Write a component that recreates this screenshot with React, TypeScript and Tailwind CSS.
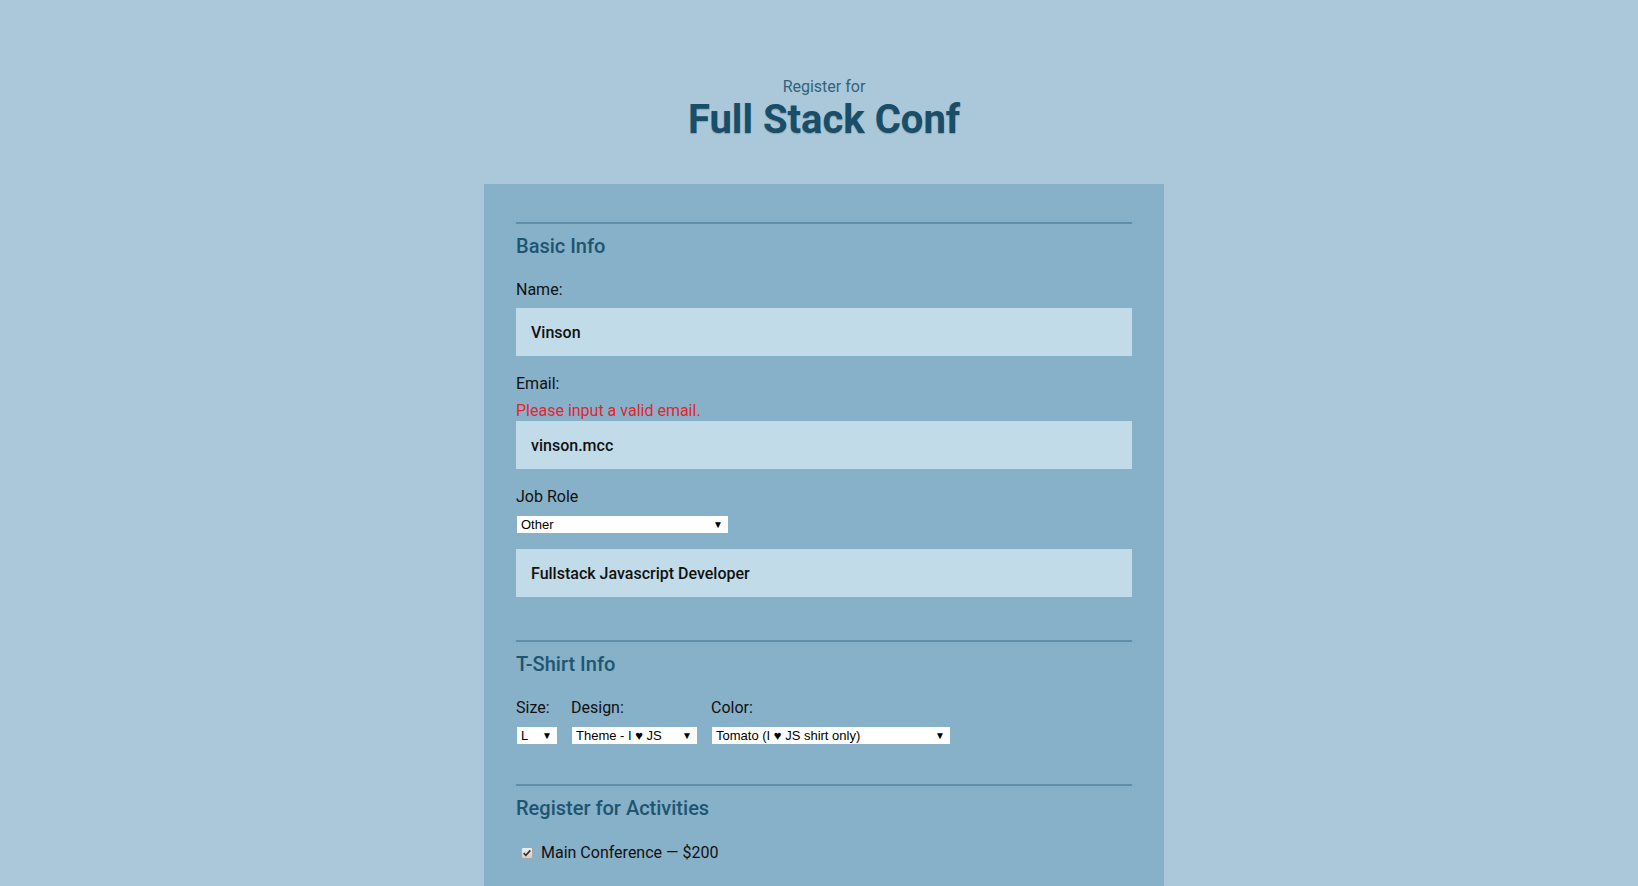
import React from 'react';

const FakeSelect: React.FC<{ value: string; className: string }> = ({ value, className }) => (
    <div
        className={`ml-[1px] flex h-[17px] items-center justify-between bg-white pl-[4px] pr-[5px] font-['Liberation_Sans',Arial,sans-serif] text-[13px] leading-[17px] text-black ${className}`}
    >
        <span className="whitespace-nowrap">{value}</span>
        <span className="text-[10px] leading-none">▼</span>
    </div>
);

const TextField: React.FC<{ value: string; className?: string }> = ({ value, className = '' }) => (
    <div className={`flex h-[48px] items-center bg-[#c1dbe8] px-[15px] pt-[1px] text-[16px] font-medium text-[#111] ${className}`}>
        {value}
    </div>
);

const Legend: React.FC<{ children: React.ReactNode }> = ({ children }) => (
    <h2 className="mt-[9px] pt-[1px] text-[20px] leading-[24px] font-medium text-[#1e5571]">{children}</h2>
);

export default function App() {
    return (
        <div className="min-h-screen bg-[#abc8da] pl-[10px] font-['Roboto','Noto_Sans',sans-serif]">
            <header className="pt-[78px] text-center">
                <p className="text-[16px] leading-[17px] text-[#32627c]">Register for</p>
                <h1 className="mt-[5px] text-[40px] leading-[40px] font-bold text-[#184e67] [text-shadow:0_1px_1px_rgba(0,0,0,0.2)]">
                    Full Stack Conf
                </h1>
            </header>

            <form className="mx-auto mt-[44px] w-[680px] bg-[#87b0c9] px-[32px] pt-[38px] pb-[60px] text-[#111]">
                <fieldset className="border-t-2 border-[#5f8eab]">
                    <Legend>Basic Info</Legend>

                    <label className="mt-[21px] block pt-[1px] text-[16px] leading-[20px]">Name:</label>
                    <TextField value="Vinson" className="mt-[8px]" />

                    <label className="mt-[17px] block pt-[1px] text-[16px] leading-[20px]">Email:</label>
                    <p className="mt-[6px] pt-[1px] text-[16px] leading-[20px] text-[#e5242f]">Please input a valid email.</p>
                    <TextField value="vinson.mcc" />

                    <label className="mt-[17px] block pt-[1px] text-[16px] leading-[20px]">Job Role</label>
                    <FakeSelect value="Other" className="mt-[9px] w-[211px]" />
                    <TextField value="Fullstack Javascript Developer" className="mt-[16px]" />
                </fieldset>

                <fieldset className="mt-[43px] border-t-2 border-[#5f8eab]">
                    <Legend>T-Shirt Info</Legend>
                    <div className="mt-[21px] flex gap-[14px]">
                        <div className="w-[41px]">
                            <label className="block pt-[1px] text-[16px] leading-[20px]">Size:</label>
                            <FakeSelect value="L" className="mt-[9px] w-[40px]" />
                        </div>
                        <div className="w-[126px]">
                            <label className="block pt-[1px] text-[16px] leading-[20px]">Design:</label>
                            <FakeSelect value="Theme - I ♥ JS" className="mt-[9px] w-[125px]" />
                        </div>
                        <div className="w-[239px]">
                            <label className="block pt-[1px] text-[16px] leading-[20px]">Color:</label>
                            <FakeSelect value="Tomato (I ♥ JS shirt only)" className="mt-[9px] w-[238px]" />
                        </div>
                    </div>
                </fieldset>

                <fieldset className="mt-[40px] border-t-2 border-[#5f8eab]">
                    <Legend>Register for Activities</Legend>
                    <label className="mt-[22px] flex items-start gap-[8px] pt-[1px] text-[16px] leading-[20px]">
                        <span className="mt-[4px] ml-[5px] flex h-[12px] w-[12px] items-center justify-center rounded-[2px] border border-[#a9a9a9] bg-gradient-to-b from-[#f0f0f0] to-[#cfcfcf]">
                            <svg viewBox="0 0 12 12" className="h-[10px] w-[10px]">
                                <path d="M2 6.2 L4.6 8.8 L10 2.8" fill="none" stroke="#333" strokeWidth="2" />
                            </svg>
                        </span>
                        Main Conference — $200
                    </label>
                </fieldset>
            </form>
        </div>
    );
}
